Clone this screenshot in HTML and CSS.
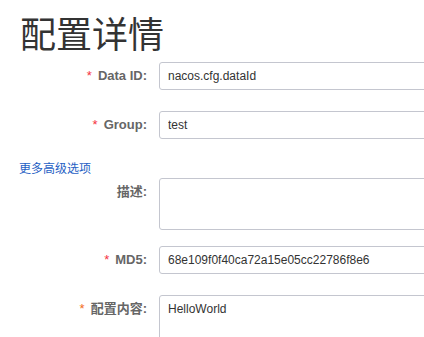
FILE: index.html
```html
<!DOCTYPE html>
<html lang="zh-CN">
  <head>
    <meta charset="UTF-8" />
    <meta name="viewport" content="width=device-width, initial-scale=1.0" />
    <title>配置详情</title>
    <link rel="stylesheet" href="styles.css">
  </head>
  <body>
    <div class="config_page">
      <h1 class="config_title">配置详情</h1>
      <form class="config_form">
        <div class="config_row">
          <label class="config_label"><span class="config_required">*</span>Data ID:</label>
          <div class="config_control">
            <input class="config_input" type="text" value="nacos.cfg.dataId" readonly />
          </div>
        </div>
        <div class="config_row">
          <label class="config_label"><span class="config_required">*</span>Group:</label>
          <div class="config_control">
            <input class="config_input" type="text" value="test" readonly />
          </div>
        </div>
        <a class="config_more" href="#">更多高级选项</a>
        <div class="config_row config_row-tight">
          <label class="config_label">描述:</label>
          <div class="config_control">
            <textarea class="config_textarea config_textarea-desc" readonly></textarea>
          </div>
        </div>
        <div class="config_row config_row-md5">
          <label class="config_label"><span class="config_required">*</span>MD5:</label>
          <div class="config_control">
            <input class="config_input" type="text" value="68e109f0f40ca72a15e05cc22786f8e6" readonly />
          </div>
        </div>
        <div class="config_row">
          <label class="config_label"><span class="config_required config_required-warn">*</span>配置内容:</label>
          <div class="config_control">
            <textarea class="config_textarea config_textarea-content" readonly>HelloWorld</textarea>
          </div>
        </div>
      </form>
    </div>
  </body>
</html>
```

FILE: styles.css
```css
body {
  margin: 0;
  color: #333;
  background-color: #fff;
  font-family: "Liberation Sans", "Noto Sans CJK SC", sans-serif;
  font-size: 12px;
  overflow: hidden;
}

.config_page {
  padding-top: 10px;
}

.config_title {
  margin: 0 0 8px 20px;
  font-family: "Noto Sans CJK SC", sans-serif;
  font-size: 36px;
  font-weight: 400;
  line-height: 44px;
  color: #333;
}

.config_form {
  margin: 0;
}

.config_row {
  display: flex;
  gap: 12px;
  margin-bottom: 21px;
}

.config_row-tight {
  margin-bottom: 16px;
}

.config_label {
  width: 147px;
  flex-shrink: 0;
  text-align: right;
  font-size: 13px;
  font-weight: 700;
  line-height: 28px;
  color: #666;
}

.config_required {
  color: #f5333f;
  margin-right: 6px;
  font-weight: 400;
}

.config_required-warn {
  color: #f26a1b;
}

.config_control {
  width: 320px;
  flex-shrink: 0;
}

.config_input,
.config_textarea {
  display: block;
  box-sizing: border-box;
  width: 100%;
  margin: 0;
  border: 1px solid #c4c6cf;
  border-radius: 3px;
  background-color: #fff;
  color: #333;
  font-family: "Liberation Sans", "Noto Sans CJK SC", sans-serif;
  font-size: 12px;
  outline: none;
}

.config_input {
  height: 28px;
  padding: 0 8px;
}

.config_textarea {
  padding: 4px 8px;
  line-height: 18px;
  resize: none;
}

.config_textarea-desc {
  height: 52px;
}

.config_textarea-content {
  height: 100px;
}

.config_more {
  display: block;
  margin: 0 0 0 19px;
  padding-top: 0;
  font-size: 12px;
  line-height: 18px;
  height: 18px;
  color: #1f5fc4;
  text-decoration: none;
}
```
